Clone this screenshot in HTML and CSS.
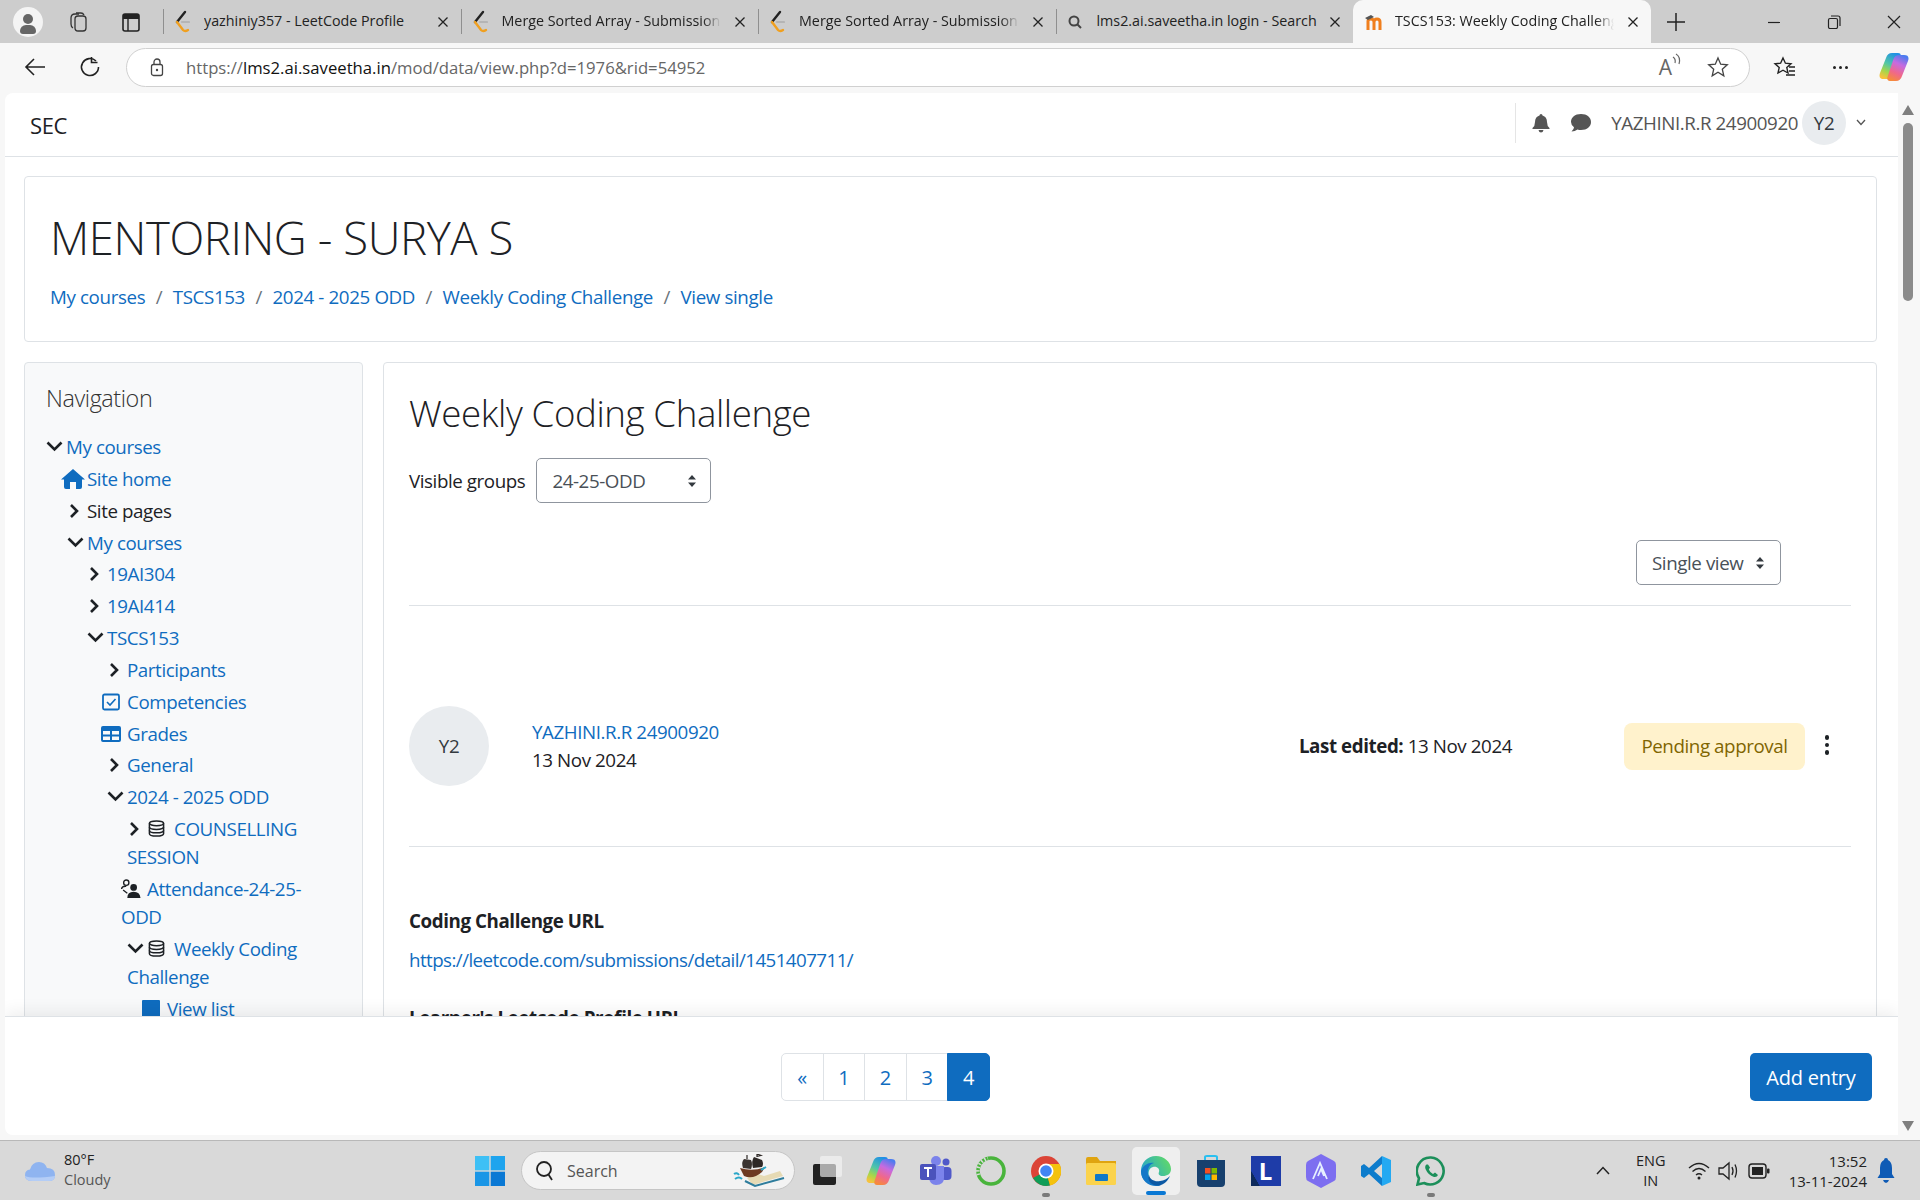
FILE: index.html
```html
<!DOCTYPE html>
<html lang="en">
<head>
    <meta charset="UTF-8">
    <meta name="viewport" content="width=device-width, initial-scale=1.0">
    <title>TSCS153: Weekly Coding Challenge</title>
    <link rel="stylesheet" href="styles.css">
</head>
<body>

<svg class="defs" width="0" height="0">
    <defs>
        <linearGradient id="cop-left" x1="0.7" y1="0" x2="0.3" y2="1">
            <stop offset="0" stop-color="#1f8fe6"/>
            <stop offset="0.45" stop-color="#4fc6a8"/>
            <stop offset="0.75" stop-color="#a6d64a"/>
            <stop offset="1" stop-color="#f7c23c"/>
        </linearGradient>
        <linearGradient id="cop-right" x1="0.7" y1="0" x2="0.3" y2="1">
            <stop offset="0" stop-color="#4a7cf0"/>
            <stop offset="0.35" stop-color="#c66be0"/>
            <stop offset="0.7" stop-color="#f0688a"/>
            <stop offset="1" stop-color="#f68a3c"/>
        </linearGradient>
        <linearGradient id="edge-top" x1="0" y1="0.8" x2="1" y2="0.3">
            <stop offset="0" stop-color="#1ea0d8"/>
            <stop offset="1" stop-color="#5fd86a"/>
        </linearGradient>
    </defs>
    <symbol id="lc" viewBox="0 0 16 24">
        <path d="M11 2 L3 12" fill="none" stroke="#222" stroke-width="2.4" stroke-linecap="round"/>
        <path d="M3 12 L9 20 Q11 22 14 20" fill="none" stroke="#f0a020" stroke-width="2.4" stroke-linecap="round"/>
        <path d="M8 12 H15" stroke="#b5b5b5" stroke-width="2.2" stroke-linecap="round"/>
    </symbol>
    <symbol id="x" viewBox="0 0 12 12">
        <path d="M1.5 1.5 L10.5 10.5 M10.5 1.5 L1.5 10.5" stroke="#222" stroke-width="1.3" fill="none"/>
    </symbol>
    <symbol id="right" viewBox="0 0 20 16" preserveAspectRatio="xMinYMid">
        <path d="M4 2 L10 8 L4 14" fill="none" stroke="#1d2125" stroke-width="2.6"/>
    </symbol>
    <symbol id="down" viewBox="0 0 20 16" preserveAspectRatio="xMinYMid">
        <path d="M1.5 3.5 L8.5 10.5 L15.500 3.5" fill="none" stroke="#1d2125" stroke-width="2.6"/>
    </symbol>
    <symbol id="db" viewBox="0 0 18 18">
        <g fill="none" stroke="#1d2125" stroke-width="1.6">
            <ellipse cx="9" cy="3.5" rx="7.5" ry="2.5"/>
            <path d="M1.5 3.5 V14.5 C1.5 16 4.5 17 9 17 C13.5 17 16.5 16 16.5 14.5 V3.5"/>
            <path d="M1.5 7.5 C1.5 9 4.5 10 9 10 C13.5 10 16.5 9 16.5 7.5"/>
            <path d="M1.5 11 C1.5 12.5 4.5 13.5 9 13.5 C13.5 13.5 16.5 12.5 16.5 11"/>
        </g>
    </symbol>
    <symbol id="sort" viewBox="0 0 10 14">
        <path d="M5 1 L9 5.5 H1 Z M5 13 L1 8.5 H9 Z" fill="#343a40"/>
    </symbol>
    <symbol id="copilot" viewBox="0 0 30 30">
        <path d="M19 1 H13 Q8.500 1 7 6 L1 21 Q-1 27 5 27 H10 Q14 27 15.500 23 L21.500 5 Q22.500 1 19 1 Z" fill="url(#cop-left)"/>
        <path d="M11 29 H17 Q21.500 29 23 24 L29 9 Q31 3 25 3 H20 Q16 3 14.500 7 L8.500 25 Q7.500 29 11 29 Z" fill="url(#cop-right)"/>
    </symbol>
</svg>

<div class="window">
    <div class="tabstrip">
        <div class="profile"><span class="profile-head"></span><span class="profile-body"></span></div>
        <svg class="strip-icon" width="20" height="22" viewBox="0 0 20 22"><g fill="none" stroke="#333" stroke-width="1.3"><rect x="7" y="5" width="11" height="15" rx="3"/><path d="M5 17 Q3 16 3 13 V7 Q3 3 7 3 H11"/><path d="M8 2 H13 Q15 2 16 4"/></g></svg>
        <svg class="strip-icon" width="20" height="22" viewBox="0 0 20 22"><rect x="2" y="3" width="16" height="17" rx="2" fill="none" stroke="#222" stroke-width="1.6"/><rect x="2" y="3" width="16" height="5" fill="#222"/><path d="M7 8 V20" stroke="#222" stroke-width="1.4"/></svg>

        <div class="tab first full">
            <svg class="favicon" width="16" height="24"><use href="#lc"/></svg>
            <span class="tab-title">yazhiniy357 - LeetCode Profile</span>
            <svg class="tab-x" width="12" height="12"><use href="#x"/></svg>
        </div>
        <div class="tab">
            <svg class="favicon" width="16" height="24"><use href="#lc"/></svg>
            <span class="tab-title">Merge Sorted Array - Submission</span>
            <svg class="tab-x" width="12" height="12"><use href="#x"/></svg>
        </div>
        <div class="tab">
            <svg class="favicon" width="16" height="24"><use href="#lc"/></svg>
            <span class="tab-title">Merge Sorted Array - Submission</span>
            <svg class="tab-x" width="12" height="12"><use href="#x"/></svg>
        </div>
        <div class="tab full">
            <svg class="favicon" width="16" height="16" viewBox="0 0 16 16"><circle cx="7" cy="7" r="4.5" fill="none" stroke="#444" stroke-width="2"/><path d="M10.5 10.5 L14 14" stroke="#444" stroke-width="2"/></svg>
            <span class="tab-title">lms2.ai.saveetha.in login - Search</span>
            <svg class="tab-x" width="12" height="12"><use href="#x"/></svg>
        </div>
        <div class="tab active">
            <svg class="favicon" width="20" height="18" viewBox="0 0 20 18"><path d="M4 17 V8 Q4 6 7 6 Q10 6 10 9 V17 M10 9 Q10 6 13 6 Q16 6 16 9 V17" fill="none" stroke="#f07f1d" stroke-width="3"/><path d="M1 5 L7 2 L10 4 L4 7 Z" fill="#555"/></svg>
            <span class="tab-title">TSCS153: Weekly Coding Challenge</span>
            <svg class="tab-x" width="12" height="12"><use href="#x"/></svg>
        </div>

        <svg class="new-tab" width="20" height="20" viewBox="0 0 20 20"><path d="M10 1 V19 M1 10 H19" stroke="#222" stroke-width="1.5"/></svg>

        <div class="win-buttons">
            <svg width="14" height="14" viewBox="0 0 14 14"><path d="M1 7.5 H13" stroke="#222" stroke-width="1.2"/></svg>
            <svg width="14" height="14" viewBox="0 0 14 14"><rect x="1.5" y="3.5" width="9" height="10" rx="1.5" fill="none" stroke="#222" stroke-width="1.2"/><path d="M4 1 H11 Q13 1 13 3 V11" fill="none" stroke="#222" stroke-width="1.2"/></svg>
            <svg width="14" height="14" viewBox="0 0 14 14"><path d="M1 1 L13 13 M13 1 L1 13" stroke="#222" stroke-width="1.2"/></svg>
        </div>
    </div>

    <div class="toolbar">
        <svg class="tool-icon" width="22" height="20" viewBox="0 0 22 20"><path d="M21 10 H2 M10 2 L2 10 L10 18" fill="none" stroke="#222" stroke-width="1.6"/></svg>
        <svg class="tool-icon reload" width="22" height="22" viewBox="0 0 22 22"><path d="M17 5 A8.5 8.5 0 1 0 19.5 11" fill="none" stroke="#222" stroke-width="1.6"/><path d="M12.5 1 V6.5 H18.5" fill="none" stroke="#222" stroke-width="1.6"/></svg>
        <div class="address">
            <svg width="14" height="20" viewBox="0 0 14 20"><rect x="1.5" y="7.5" width="11" height="11" rx="2" fill="none" stroke="#444" stroke-width="1.3"/><path d="M4 7.5 V5 A3 3 0 0 1 10 5 V7.5" fill="none" stroke="#444" stroke-width="1.3"/><circle cx="7" cy="13" r="1.2" fill="#444"/></svg>
            <span class="url">https://<b>lms2.ai.saveetha.in</b>/mod/data/view.php?d=1976&amp;rid=54952</span>
            <span class="read-aloud">A<svg width="10" height="13" viewBox="0 0 10 13"><path d="M1 4 Q4 6 3 10 M4 1 Q9 4 7 11" fill="none" stroke="#666" stroke-width="1.2"/></svg></span>
            <svg width="22" height="22" viewBox="0 0 22 22"><path d="M11 2 L13.7 8.2 L20.3 8.8 L15.3 13.2 L16.8 19.8 L11 16.3 L5.2 19.8 L6.7 13.2 L1.7 8.8 L8.3 8.2 Z" fill="none" stroke="#444" stroke-width="1.3"/></svg>
        </div>
        <svg class="fav-hub" width="24" height="24" viewBox="0 0 24 24"><path d="M10 3 L12.4 8.2 L18 8.8 L13.8 12.6 L15 18 L10 15.2 L5 18 L6.2 12.6 L2 8.8 L7.6 8.2 Z" fill="none" stroke="#222" stroke-width="1.4"/><path d="M16 12 H22 M16 16 H22 M13 20 H22" stroke="#222" stroke-width="1.4"/></svg>
        <span class="dots"><i></i><i></i><i></i></span>
        <svg class="tool-copilot" width="30" height="30"><use href="#copilot"/></svg>
    </div>

    <div class="viewport">
        <div class="page">
            <nav class="navbar">
                <span class="brand">SEC</span>
                <div class="user-menu">
                    <svg width="18" height="20" viewBox="0 0 18 20"><path d="M9 1 Q10.5 1 10.5 2.6 Q15 4 15 9 Q15 13 17.5 15 V16 H0.5 V15 Q3 13 3 9 Q3 4 7.5 2.6 Q7.5 1 9 1 Z M6.5 17 H11.5 Q11 19.5 9 19.5 Q7 19.5 6.5 17 Z" fill="#555"/></svg>
                    <svg class="chat" width="22" height="20" viewBox="0 0 22 20"><path d="M11 1 C17 1 21 4.500 21 9 C21 13.500 17 17 11 17 Q9 17 7.500 16.400 Q5 18.500 1.500 18.500 Q4 16.500 4 14.300 Q1 12 1 9 C1 4.500 5 1 11 1 Z" fill="#555"/></svg>
                    <span class="user-name">YAZHINI.R.R 24900920</span>
                    <span class="avatar-small">Y2</span>
                    <svg class="caret" width="10" height="7" viewBox="0 0 10 7"><path d="M1 1 L5 5.500 L9 1" fill="none" stroke="#555" stroke-width="1.300"/></svg>
                </div>
            </nav>

            <div class="scroll-area">
                <header class="page-header">
                    <h1>MENTORING - SURYA S</h1>
                    <ol class="breadcrumb">
                        <li><a>My courses</a></li>
                        <li><a>TSCS153</a></li>
                        <li><a>2024 - 2025 ODD</a></li>
                        <li><a>Weekly Coding Challenge</a></li>
                        <li><a>View single</a></li>
                    </ol>
                </header>

                <div class="columns">
                    <aside class="nav-block">
                        <h5>Navigation</h5>
                        <ul class="tree">
                            <li>
                                <p class="item"><svg class="chev"><use href="#down"/></svg><a>My courses</a></p>
                                <ul>
                                    <li><p class="item">
                                        <svg class="leaf leaf-home" viewBox="0 0 24 20"><path d="M12 0 L24 10.500 L21 10.500 V18 Q21 20 19 20 H15 V13 H9 V20 H5 Q3 20 3 18 V10.500 H0 Z" fill="#0f6cbf"/></svg><a>Site home</a></p></li>
                                    <li><p class="item"><svg class="chev"><use href="#right"/></svg>Site pages</p></li>
                                    <li>
                                        <p class="item"><svg class="chev"><use href="#down"/></svg><a>My courses</a></p>
                                        <ul>
                                            <li><p class="item"><svg class="chev"><use href="#right"/></svg><a>19AI304</a></p></li>
                                            <li><p class="item"><svg class="chev"><use href="#right"/></svg><a>19AI414</a></p></li>
                                            <li>
                                                <p class="item"><svg class="chev"><use href="#down"/></svg><a>TSCS153</a></p>
                                                <ul>
                                                    <li><p class="item"><svg class="chev"><use href="#right"/></svg><a>Participants</a></p></li>
                                                    <li><p class="item"><svg class="leaf" viewBox="0 0 20 20"><rect x="2" y="2.500" width="16" height="15" rx="1.500" fill="none" stroke="#0f6cbf" stroke-width="1.800"/><path d="M6 10 L9 13 L14.500 7" fill="none" stroke="#0f6cbf" stroke-width="1.600"/></svg><a>Competencies</a></p></li>
                                                    <li><p class="item"><svg class="leaf" viewBox="0 0 20 20"><path fill-rule="evenodd" d="M2 2 H18 Q20 2 20 4 V16 Q20 18 18 18 H2 Q0 18 0 16 V4 Q0 2 2 2 Z M2 7 V10.500 H9 V7 Z M11 7 V10.500 H18 V7 Z M2 12.500 V16 H9 V12.500 Z M11 12.500 V16 H18 V12.500 Z" fill="#0f6cbf"/></svg><a>Grades</a></p></li>
                                                    <li><p class="item"><svg class="chev"><use href="#right"/></svg><a>General</a></p></li>
                                                    <li>
                                                        <p class="item"><svg class="chev"><use href="#down"/></svg><a>2024 - 2025 ODD</a></p>
                                                        <ul>
                                                            <li><p class="item"><svg class="chev"><use href="#right"/></svg><svg class="db"><use href="#db"/></svg><a>COUNSELLING SESSION</a></p></li>
                                                            <li><p class="item item-outdent"><svg class="leaf" viewBox="1 1 19 18"><circle cx="6" cy="4" r="2.500" fill="none" stroke="#1d2125" stroke-width="1.300"/><path d="M1.500 10 Q2 7 6 7.500 M3 11 L7 14" fill="none" stroke="#1d2125" stroke-width="1.300"/><circle cx="13" cy="8.500" r="3.200" fill="#1d2125"/><path d="M7 18.500 Q7 12.500 13 12.500 Q19 12.500 19.500 18.500 Z" fill="#1d2125"/></svg><a>Attendance-24-25-ODD</a></p></li>
                                                            <li>
                                                                <p class="item"><svg class="chev"><use href="#down"/></svg><svg class="db"><use href="#db"/></svg><a>Weekly Coding Challenge</a></p>
                                                                <ul>
                                                                    <li><p class="item"><svg class="leaf" viewBox="0 0 20 20"><rect x="1" y="1" width="18" height="18" rx="1" fill="#0f6cbf"/></svg><a>View list</a></p></li>
                                                                </ul>
                                                            </li>
                                                        </ul>
                                                    </li>
                                                </ul>
                                            </li>
                                        </ul>
                                    </li>
                                </ul>
                            </li>
                        </ul>
                    </aside>

                    <main class="main-block">
                        <h2>Weekly Coding Challenge</h2>
                        <div class="groups">
                            <label>Visible groups</label>
                            <div class="select select-groups">24-25-ODD<svg width="10" height="14"><use href="#sort"/></svg></div>
                        </div>
                        <div class="view-row">
                            <div class="select select-view">Single view<svg width="10" height="14"><use href="#sort"/></svg></div>
                        </div>
                        <div class="entry-head">
                            <span class="avatar">Y2</span>
                            <div class="entry-user">
                                <a>YAZHINI.R.R 24900920</a>
                                <span>13 Nov 2024</span>
                            </div>
                            <div class="entry-edited"><b>Last edited:</b> 13 Nov 2024</div>
                            <span class="badge">Pending approval</span>
                            <span class="kebab"><i></i><i></i><i></i></span>
                        </div>
                        <div class="field">
                            <b>Coding Challenge URL</b>
                            <a>https://leetcode.com/submissions/detail/1451407711/</a>
                        </div>
                        <div class="field">
                            <b>Learner's Leetcode Profile URL</b>
                        </div>
                    </main>
                </div>
            </div>

            <footer class="sticky-footer">
                <ul class="pagination">
                    <li>«</li>
                    <li>1</li>
                    <li>2</li>
                    <li>3</li>
                    <li class="current">4</li>
                </ul>
                <button class="add-entry">Add entry</button>
            </footer>
        </div>

        <div class="scrollbar">
            <svg width="12" height="10" viewBox="0 0 12 10"><path d="M6 0 L12 10 H0 Z" fill="#7f7f7f"/></svg>
            <span class="thumb"></span>
            <svg class="arrow-down" width="12" height="10" viewBox="0 0 12 10"><path d="M0 0 H12 L6 10 Z" fill="#7f7f7f"/></svg>
        </div>
    </div>

    <div class="taskbar">
        <div class="weather">
            <svg width="32" height="24" viewBox="0 0 32 24"><path d="M8 22 Q1 22 1 16 Q1 11 6 10.500 Q8 3 15 3 Q21 3 23 9 Q31 9 31 16 Q31 22 25 22 Z" fill="#8fb4f0"/><path d="M1 17 Q8 20 31 17 Q31 22 25 22 H8 Q2 22 1 17 Z" fill="#b4cdf6"/></svg>
            <div class="weather-text"><span>80°F</span><span class="muted">Cloudy</span></div>
        </div>

        <div class="task-icons">
            <svg class="win-logo" width="30" height="30" viewBox="0 0 30 30"><rect width="14.300" height="14.300" fill="#3ec0f5"/><rect x="15.700" width="14.300" height="14.300" fill="#1ea4ee"/><rect y="15.700" width="14.300" height="14.300" fill="#1a96e6"/><rect x="15.700" y="15.700" width="14.300" height="14.300" fill="#0a78d4"/></svg>
            <div class="search-pill">
                <svg width="20" height="22" viewBox="0 0 20 22"><circle cx="9" cy="9" r="7" fill="none" stroke="#222" stroke-width="1.800"/><path d="M13.500 14.500 L17 20" stroke="#222" stroke-width="1.800"/></svg>
                <span>Search</span>
                <svg class="pirate" width="52" height="34" viewBox="0 0 52 34">
                    <path d="M20 31 L50 22 L47 17 L31 22 L22 19 L14 24 Z" fill="#e6dab4"/>
                    <path d="M12 27 L22 32 L51 24" fill="none" stroke="#2f7d9c" stroke-width="2"/>
                    <path d="M7 14 L11 22 Q20 26 29 18 L32 13 Q20 18 7 14 Z" fill="#6e3a22"/>
                    <path d="M10 14 Q8 8 11 5 L18 6 Q20 10 18 15 Z" fill="#3a3330"/>
                    <path d="M20 14 Q18 7 21 3 L29 6 Q31 10 29 13 Z" fill="#2e2826"/>
                    <path d="M14 5 V1 M24 3 V0 L28 1.500 L24 2.500" fill="none" stroke="#2e2826" stroke-width="1.200"/>
                    <path d="M1 20 Q4 18 6 21 M2 25 Q6 22 9 25 M28 16 L33 13" fill="none" stroke="#2aa6c8" stroke-width="2"/>
                </svg>
            </div>
            <span class="task-app stack"><i class="stack-front"></i><i class="stack-back"></i></span>
            <svg class="task-app copilot-app" width="30" height="30"><use href="#copilot"/></svg>
            <svg class="task-app tight" width="32" height="30" viewBox="0 0 32 30"><circle cx="26" cy="6" r="3.500" fill="#5059c9"/><rect x="21" y="11" width="10.500" height="13" rx="4" fill="#5059c9"/><circle cx="16" cy="5" r="5" fill="#7b83eb"/><path d="M9 10 H24 V22 Q24 29 16 29 Q10 29 9 22 Z" fill="#7b83eb"/><rect x="0" y="8" width="16" height="16" rx="2" fill="#4b53bc"/><path d="M4 12 H12 M8 12 V21" stroke="#fff" stroke-width="2"/></svg>
            <svg class="task-app tight" width="30" height="30" viewBox="0 0 30 30"><circle cx="15" cy="15" r="13" fill="none" stroke="#49b43c" stroke-width="3.600"/><path d="M2.500 19 A13 13 0 0 1 12 2.300" fill="none" stroke="#d9d9d9" stroke-width="3.600" stroke-dasharray="1.500 2"/></svg>
            <span class="task-slot running">
                <svg width="30" height="30" viewBox="0 0 30 30"><circle cx="15" cy="15" r="15" fill="#db4437"/><path d="M15 15 L2 22 A15 15 0 0 0 19 29.500 Z" fill="#0f9d58"/><path d="M15 15 L19 29.500 A15 15 0 0 0 28.500 8 L15 8 Z" fill="#f4c20d"/><circle cx="15" cy="15" r="7.500" fill="#fff"/><circle cx="15" cy="15" r="5.800" fill="#4285f4"/></svg>
            </span>
            <svg class="task-app" width="30" height="28" viewBox="0 0 30 28"><path d="M0 2 Q0 0 2 0 H11 L14 4 H30 V10 H0 Z" fill="#e0a410"/><rect y="6" width="30" height="22" rx="1.500" fill="#fbd34d"/><rect x="9" y="17" width="13" height="7" rx="1" fill="#0f78c8"/></svg>
            <span class="task-slot edge-slot">
                <svg width="30" height="30" viewBox="0 0 30 30">
                    <path d="M0 15 C0 7 6 0 15 0 C23 0 30 6 30 13 C30 18 26 20 22 20 C18 20 17 18 18 16 C19 13 16 10 12 11 C8 12 7 16 8 20 L6 26 C2 24 0 20 0 15 Z" fill="url(#edge-top)"/>
                    <path d="M0 15 C2 9 8 6 13 7 C9 8 6 12 7 18 C8 24 13 29 20 29 C18 30 17 30 15 30 C7 30 0 24 0 15 Z" fill="#1478c8"/>
                    <path d="M29 20 C26 27 20 30 16 29.500 C10 29 6 25 8 19 C9 24 14 26 19 25 C23 24.500 26 23 29 20 Z" fill="#0c59a4"/>
                </svg>
            </span>
            <svg class="task-app" width="30" height="34" viewBox="0 0 30 34"><path d="M9 8 V3 Q9 2 11 2 H19 Q21 2 21 3 V8" fill="none" stroke="#2ac0f0" stroke-width="2"/><path d="M1 6 H29 V29 Q29 33 25 33 H5 Q1 33 1 29 Z" fill="#17406e"/><rect x="9" y="14" width="5.500" height="5.500" fill="#f25022"/><rect x="15.500" y="14" width="5.500" height="5.500" fill="#7fba00"/><rect x="9" y="20.500" width="5.500" height="5.500" fill="#00a4ef"/><rect x="15.500" y="20.500" width="5.500" height="5.500" fill="#ffb900"/></svg>
            <span class="l-tile">L</span>
            <svg class="task-app" width="30" height="34" viewBox="0 0 30 34"><path d="M15 0 L28 7 Q30 8 30 11 V23 Q30 26 28 27 L15 34 L2 27 Q0 26 0 23 V11 Q0 8 2 7 Z" fill="#7d6ef0"/><path d="M7 25 L14 9 L21 25 M12 22 L15 15 L18 22" fill="none" stroke="#e6f0ff" stroke-width="1.800"/></svg>
            <svg class="task-app" width="30" height="30" viewBox="0 0 30 30"><path d="M21 0 L8 12 L3 8 L0 10 V20 L3 22 L8 18 L21 30 V22 L13 15 L21 8 Z" fill="#0d7ccc"/><path d="M21 0 L30 4 V26 L21 30 Z" fill="#23a9f2"/></svg>
            <span class="task-slot running">
                <svg width="30" height="30" viewBox="0 0 30 30"><path d="M15 1.500 A13.500 13.500 0 1 1 8 27 L1.500 28.500 L3 22.300 A13.500 13.500 0 0 1 15 1.500 Z" fill="none" stroke="#1c8f5a" stroke-width="2.600"/><path d="M10.500 8.500 Q8.500 10 9.500 13 Q12 19 18 21 Q21 21.500 22 19 L19 16.500 L17 18 Q14 16.500 12.800 13.500 L14 11.500 L12 8.500 Z" fill="#1c8f5a"/></svg>
            </span>
        </div>

        <div class="tray">
            <svg width="14" height="9" viewBox="0 0 14 9"><path d="M1 8 L7 1.500 L13 8" fill="none" stroke="#222" stroke-width="1.500"/></svg>
            <div class="lang"><span>ENG</span><span>IN</span></div>
            <div class="tray-icons">
                <svg width="22" height="20" viewBox="0 0 22 20"><g fill="none" stroke="#222" stroke-width="1.400"><path d="M1 7 Q11 -2 21 7"/><path d="M4.500 10.500 Q11 4.500 17.500 10.500"/><path d="M8 14 Q11 11.500 14 14"/></g><circle cx="11" cy="17" r="1.500" fill="#222"/></svg>
                <svg width="22" height="20" viewBox="0 0 22 20"><path d="M1 7 H5 L11 2 V18 L5 13 H1 Z" fill="none" stroke="#222" stroke-width="1.300"/><path d="M14 6 Q16 10 14 14 M17 3.500 Q20 10 17 16.500" fill="none" stroke="#222" stroke-width="1.300"/></svg>
                <svg width="22" height="16" viewBox="0 0 22 16"><rect x="1" y="1" width="17" height="14" rx="3" fill="none" stroke="#222" stroke-width="1.400"/><rect x="4" y="4" width="11" height="8" fill="#222"/><rect x="19" y="5.500" width="2.500" height="5" rx="1" fill="#222"/></svg>
            </div>
            <div class="clock"><span>13:52</span><span>13-11-2024</span></div>
            <svg width="18" height="28" viewBox="0 0 18 28"><path d="M9 1 Q11 1 11 3 Q15 5 15 11 V17 L17.500 21 H0.500 L3 17 V11 Q3 5 7 3 Q7 1 9 1 Z" fill="#0f5bb5"/><path d="M6 23 H12 Q11 26 9 26 Q7 26 6 23 Z" fill="#0f5bb5"/></svg>
        </div>
    </div>
</div>

</body>
</html>
```

FILE: styles.css
```css
* {
    box-sizing: border-box;
}
html, body {
    margin: 0;
    padding: 0;
    height: 100%;
}
body {
    font-family: "Open Sans", "Noto Sans", sans-serif;
    color: #1d2125;
    overflow: hidden;
}
.defs {
    position: absolute;
}
svg {
    flex-shrink: 0;
}
a {
    color: #0f6cbf;
    text-decoration: none;
}
ul, ol {
    list-style: none;
    margin: 0;
    padding: 0;
}
.window {
    width: 1920px;
    height: 1200px;
    display: flex;
    flex-direction: column;
    background: #f7f7f7;
}

/* tab strip */
.tabstrip {
    height: 43px;
    background: #cdcdcd;
    display: flex;
    align-items: center;
    flex-shrink: 0;
}
.profile {
    width: 30px;
    height: 30px;
    margin-left: 13px;
    border-radius: 50%;
    background: #f4f4f4;
    position: relative;
    overflow: hidden;
}
.profile-head {
    position: absolute;
    left: 10px;
    top: 7px;
    width: 10px;
    height: 10px;
    border-radius: 50%;
    background: #666;
}
.profile-body {
    position: absolute;
    left: 7px;
    top: 18px;
    width: 16px;
    height: 9px;
    border-radius: 6px 6px 3px 3px;
    background: #666;
}
.strip-icon {
    margin-left: 25px;
}
.strip-icon + .strip-icon {
    margin-left: 33px;
}
.tab {
    width: 297.5px;
    height: 43px;
    padding: 0 12px 0 11px;
    display: flex;
    align-items: center;
    font-size: 14.3px;
    color: #222;
    position: relative;
}
.tab::before {
    content: "";
    position: absolute;
    left: 0;
    top: 9px;
    height: 25px;
    border-left: 1px solid #8f8f8f;
}
.tab.first {
    margin-left: 22px;
}
.tab.active {
    background: #f7f7f7;
    border-radius: 10px 10px 0 0;
}
.tab.active::before {
    display: none;
}
.tab.active .favicon {
    margin-right: 11px;
}
.favicon {
    margin-right: 14px;
}
.tab-title {
    flex: 1;
    white-space: nowrap;
    overflow: hidden;
    margin-right: 13px;
    padding-bottom: 2px;
    -webkit-mask-image: linear-gradient(to left, transparent 0, #000 18px);
    mask-image: linear-gradient(to left, transparent 0, #000 18px);
}
.tab.full .tab-title {
    margin-right: 6px;
    -webkit-mask-image: none;
    mask-image: none;
}
.new-tab {
    margin-left: 15px;
}
.win-buttons {
    margin-left: auto;
    display: flex;
    gap: 46px;
    padding-right: 19px;
}

/* address bar */
.toolbar {
    height: 50px;
    flex-shrink: 0;
    display: flex;
    align-items: center;
    padding-bottom: 2px;
}
.tool-icon {
    margin-left: 24px;
}
.tool-icon.reload {
    margin-left: 33px;
}
.address {
    width: 1624px;
    height: 39px;
    margin-left: 25px;
    background: #fff;
    border: 1px solid #d0d0d0;
    border-radius: 20px;
    display: flex;
    align-items: center;
    padding: 0 20px 0 23px;
}
.url {
    margin-left: 22px;
    flex: 1;
    font-size: 16.7px;
    color: #666;
}
.url b {
    font-weight: 400;
    color: #111;
}
.read-aloud {
    font-size: 21px;
    color: #666;
    margin-right: 25px;
    display: flex;
    align-items: flex-start;
}
.fav-hub {
    margin-left: 23px;
}
.dots {
    display: flex;
    gap: 3px;
    margin-left: 36px;
}
.dots i {
    width: 3px;
    height: 3px;
    background: #222;
    border-radius: 50%;
}
.tool-copilot {
    margin-left: 31px;
}

/* page */
.viewport {
    flex: 1;
    min-height: 0;
    display: flex;
    padding-left: 5px;
    padding-bottom: 5px;
}
.page {
    width: 1893px;
    background: #fff;
    border-radius: 8px 0 0 8px;
    display: flex;
    flex-direction: column;
    overflow: hidden;
    letter-spacing: -0.026em;
}
.navbar {
    height: 64px;
    flex-shrink: 0;
    border-bottom: 1px solid #dee2e6;
    display: flex;
    align-items: center;
    justify-content: space-between;
    padding: 0 32px 0 25px;
}
.brand {
    font-size: 22px;
    color: #1d2125;
    margin-top: 1px;
}
.user-menu {
    display: flex;
    align-items: center;
    height: 40px;
    border-left: 1px solid #e5e5e5;
    padding-left: 16px;
    margin-top: -4px;
    color: #555;
}
.chat {
    margin-left: 20px;
}
.user-name {
    margin-left: 19px;
    font-size: 18.75px;
    color: #555;
}
.avatar-small {
    width: 44px;
    height: 44px;
    margin-left: 4px;
    border-radius: 50%;
    background: #e9ecef;
    color: #343a40;
    font-size: 18.75px;
    display: flex;
    align-items: center;
    justify-content: center;
}
.caret {
    margin-left: 10px;
}
.scroll-area {
    flex: 1;
    min-height: 0;
    overflow: hidden;
    padding: 19px 21px 0 19px;
    background: #fff;
}
.page-header {
    height: 166px;
    border: 1px solid #dee2e6;
    border-radius: 4px;
    padding: 32px 25px 0;
}
.page-header h1 {
    margin: 0;
    font-size: 45.5px;
    font-weight: 300;
    line-height: 56px;
}
.breadcrumb {
    display: flex;
    margin-top: 18px;
    font-size: 18.75px;
    line-height: 28px;
    letter-spacing: -0.02em;
}
.breadcrumb li + li::before {
    content: "/";
    color: #6a737b;
    padding: 0 10.5px;
}
.columns {
    display: flex;
    gap: 20px;
    margin-top: 20px;
    align-items: flex-start;
}
.nav-block {
    width: 339px;
    flex-shrink: 0;
    background: #f8f9fa;
    border: 1px solid #dee2e6;
    border-radius: 4px;
    padding: 21px 25px 20px 21px;
    height: 900px;
}
.nav-block h5 {
    margin: 0 0 21px;
    font-size: 23.4px;
    font-weight: 300;
    line-height: 28px;
    color: #333;
}
.tree {
    font-size: 18.75px;
    line-height: 28px;
}
.tree ul {
    padding-left: 20px;
}
.tree > li > ul {
    padding-left: 21px;
}
.item {
    margin: 0 0 3.85px;
}
.item-outdent {
    margin-left: -6px;
}
.item-outdent .leaf {
    margin-left: 0;
}
.chev {
    display: inline-block;
    width: 20px;
    height: 16px;
    vertical-align: -1px;
}
.db {
    display: inline-block;
    width: 17px;
    height: 17px;
    margin: 0 9px 0 1px;
    vertical-align: -1px;
}
.leaf {
    display: inline-block;
    width: 20px;
    height: 20px;
    margin: 0 6px 0 -6px;
    vertical-align: -3px;
}
.leaf-home {
    width: 24px;
    margin-right: 2px;
}
.main-block {
    flex: 1;
    height: 900px;
    border: 1px solid #dee2e6;
    border-radius: 4px;
    padding: 28px 25px 0;
}
.main-block h2 {
    margin: 0;
    font-size: 36.7px;
    font-weight: 300;
    line-height: 45px;
}
.groups {
    display: flex;
    align-items: center;
    margin-top: 22px;
    font-size: 18.75px;
}
.select {
    height: 45px;
    border: 1px solid #8f959e;
    border-radius: 5px;
    font-size: 18.75px;
    color: #495057;
    display: flex;
    align-items: center;
    justify-content: space-between;
}
.select-groups {
    width: 175px;
    margin-left: 11px;
    padding: 0 13px 0 15px;
}
.select-view {
    width: 145px;
    padding: 0 15px;
}
.view-row {
    display: flex;
    justify-content: flex-end;
    margin-top: 37px;
    padding: 0 70px 20px 0;
    border-bottom: 1px solid #dee2e6;
}
.entry-head {
    height: 241px;
    padding-top: 40px;
    display: flex;
    align-items: center;
    border-bottom: 1px solid #dee2e6;
    font-size: 18.75px;
    line-height: 28px;
}
.avatar {
    width: 80px;
    height: 80px;
    border-radius: 50%;
    background: #e9ecef;
    color: #343a40;
    font-size: 18.75px;
    display: flex;
    align-items: center;
    justify-content: center;
}
.entry-user {
    display: flex;
    flex-direction: column;
    margin-left: 43px;
}
.entry-edited {
    margin-left: auto;
}
.entry-edited b {
    font-weight: 700;
}
.badge {
    width: 181px;
    height: 47px;
    margin-left: 112px;
    border-radius: 8px;
    background: #fff2cc;
    color: #7f6500;
    display: flex;
    align-items: center;
    justify-content: center;
}
.kebab {
    width: 46px;
    display: flex;
    flex-direction: column;
    align-items: center;
    gap: 3px;
    margin-top: -2px;
    padding-right: 2px;
}
.kebab i {
    width: 4.5px;
    height: 4.5px;
    background: #1d2125;
    border-radius: 50%;
}
.field {
    font-size: 18.75px;
    line-height: 28px;
    display: flex;
    flex-direction: column;
    gap: 11px;
    padding-top: 60px;
}
.field a {
    letter-spacing: -0.03em;
}
.field + .field {
    padding-top: 30px;
}
.sticky-footer {
    height: 119px;
    flex-shrink: 0;
    background: #fff;
    border-top: 1px solid #dee2e6;
    box-shadow: 0 -4px 16px rgba(0, 0, 0, 0.07);
    position: relative;
    display: flex;
    align-items: flex-start;
    justify-content: flex-end;
    padding: 36px 26px 0 0;
    letter-spacing: 0;
}
.pagination {
    display: flex;
    margin-right: 760px;
    font-size: 20px;
    color: #0f6cbf;
}
.pagination li {
    width: 42.6px;
    height: 48px;
    border: 1px solid #dee2e6;
    margin-left: -1px;
    display: flex;
    align-items: center;
    justify-content: center;
}
.pagination li:first-child {
    border-radius: 5px 0 0 5px;
}
.pagination li.current {
    background: #0f6cbf;
    border-color: #0f6cbf;
    color: #fff;
    border-radius: 0 5px 5px 0;
}
.add-entry {
    width: 122px;
    height: 48px;
    border: none;
    border-radius: 5px;
    background: #0f6cbf;
    color: #fff;
    font-family: inherit;
    font-size: 20px;
    letter-spacing: -0.01em;
}
.scrollbar {
    flex: 1;
    display: flex;
    flex-direction: column;
    align-items: center;
    padding: 12px 2px 0 0;
    background: #f7f7f7;
}
.thumb {
    width: 10px;
    height: 178px;
    margin-top: 8px;
    border-radius: 5px;
    background: #8b8b8b;
}
.arrow-down {
    margin-top: auto;
    margin-bottom: 4px;
}

/* taskbar */
.taskbar {
    height: 60px;
    flex-shrink: 0;
    background: #d9d9d9;
    border-top: 1px solid #b8b8b8;
    display: flex;
    align-items: center;
    font-size: 14.5px;
    color: #222;
}
.weather {
    width: 475px;
    padding-left: 24px;
    display: flex;
    align-items: center;
    gap: 8px;
}
.weather-text {
    display: flex;
    flex-direction: column;
    line-height: 20px;
    padding-bottom: 2px;
}
.muted {
    color: #555;
}
.task-icons {
    display: flex;
    align-items: center;
}
.search-pill {
    width: 274px;
    height: 39px;
    margin-left: 16px;
    background: #f3f3f3;
    border: 1px solid #c5c5c5;
    border-radius: 20px;
    display: flex;
    align-items: center;
    padding: 0 9px 0 13px;
    font-size: 16px;
    color: #555;
}
.search-pill span {
    margin-left: 12px;
    flex: 1;
}
.task-app {
    margin-left: 25px;
}
.task-app.tight {
    margin-left: 24px;
}
.search-pill + .task-app {
    margin-left: 18px;
}
.copilot-app {
    margin-left: 22.5px;
}
.stack {
    width: 30px;
    height: 30px;
    position: relative;
}
.stack-back {
    position: absolute;
    left: 7px;
    top: 0;
    width: 22px;
    height: 21px;
    border-radius: 2px;
    background: rgba(245, 245, 245, 0.65);
}
.stack-front {
    position: absolute;
    left: 0;
    top: 8px;
    width: 23px;
    height: 21px;
    border-radius: 2px;
    background: #222;
}
.task-slot {
    width: 48px;
    height: 48px;
    margin-left: 16px;
    margin-right: -9px;
    display: flex;
    align-items: center;
    justify-content: center;
    border-radius: 5px;
    position: relative;
}
.running::after {
    content: "";
    position: absolute;
    bottom: -2px;
    left: 20px;
    width: 8px;
    height: 4px;
    border-radius: 2px;
    background: #7a7a7a;
}
.edge-slot {
    background: #efefef;
}
.edge-slot::after {
    content: "";
    position: absolute;
    bottom: 0;
    left: 14px;
    width: 20px;
    height: 4px;
    border-radius: 2px;
    background: #0a78d4;
}
.l-tile {
    width: 30px;
    height: 30px;
    margin-left: 25px;
    background: linear-gradient(60deg, #0e2a5c 18%, #1e3ca8 19%);
    color: #fff;
    font-size: 24px;
    font-weight: 700;
    display: flex;
    align-items: center;
    justify-content: center;
}
.tray {
    margin-left: auto;
    padding-right: 25px;
    display: flex;
    align-items: center;
}
.lang {
    margin-left: 21px;
    width: 40px;
    text-align: center;
    line-height: 20px;
    display: flex;
    flex-direction: column;
}
.tray-icons {
    margin-left: 17px;
    display: flex;
    align-items: center;
    gap: 8px;
}
.clock {
    margin-left: 19px;
    display: flex;
    flex-direction: column;
    align-items: flex-end;
    line-height: 20px;
    font-size: 15px;
}
.clock + svg {
    margin-left: 10px;
}
```
